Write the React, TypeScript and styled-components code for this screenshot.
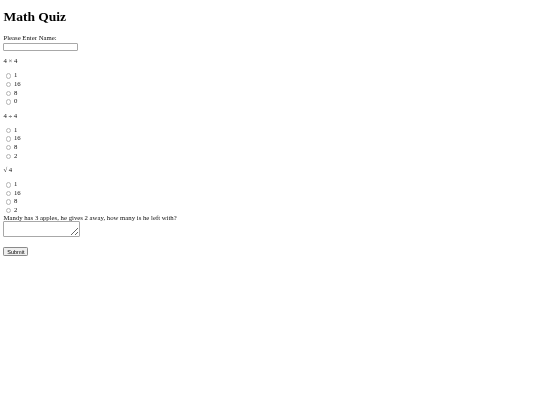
import React from 'react';
import styled, { createGlobalStyle } from 'styled-components';

const GlobalStyle = createGlobalStyle`
  body {
    margin: 0;
    background: #fff;
  }
`;

const Page = styled.div`
  padding: 0 3.4px;
  font-family: "Liberation Serif", "Times New Roman", serif;
  font-size: 6.76px;
  line-height: 8.6px;
  color: #111;
`;

const Title = styled.h1`
  font-size: 13.5px;
  line-height: 16px;
  font-weight: bold;
  color: #000;
  margin: 9.2px 0 9px;
`;

const Label = styled.label<{ $tight?: boolean }>`
  display: block;
  margin-top: ${({ $tight }) => ($tight ? '-0.6px' : '0')};
  line-height: ${({ $tight }) => ($tight ? '7.2px' : '8.6px')};
`;

const NameInput = styled.input`
  display: block;
  box-sizing: border-box;
  width: 75px;
  height: 8.7px;
  margin: 0;
  padding: 0;
  border: 1px solid #a8a8a8;
  border-radius: 1px;
  background: #fff;
`;

const Question = styled.p`
  margin: 5.7px 0;
`;

const Options = styled.div`
  margin: 5.7px 0 0;
  &:not(:last-of-type) {
    margin-bottom: 5.7px;
  }
`;

const OptionRow = styled.label`
  display: flex;
  align-items: center;
  height: 8.6px;
`;

const Radio = styled.span`
  box-sizing: border-box;
  width: 5.4px;
  height: 5.4px;
  margin: 0.8px 3px 0 2.2px;
  border: 0.5px solid #b4b4b4;
  border-radius: 50%;
  background: #fff;
`;

const Answer = styled.textarea`
  display: block;
  box-sizing: border-box;
  width: 77px;
  height: 16px;
  margin: 0;
  padding: 0;
  border: 1px solid #a8a8a8;
  border-radius: 1px;
  resize: both;
`;

const SubmitButton = styled.button`
  display: block;
  box-sizing: border-box;
  margin-top: 10.2px;
  width: 25px;
  height: 8.6px;
  padding: 0;
  font-family: "Liberation Sans", Arial, sans-serif;
  font-size: 5.6px;
  line-height: 6px;
  color: #000;
  background: #efefef;
  border: 0.6px solid #8a8a8a;
  border-radius: 1.2px;
`;

type Quiz = { q: string; options: string[] };

const quizzes: Quiz[] = [
  { q: '4 × 4', options: ['1', '16', '8', '0'] },
  { q: '4 ÷ 4', options: ['1', '16', '8', '2'] },
  { q: '√ 4', options: ['1', '16', '8', '2'] },
];

export default function App() {
  return (
    <Page>
      <GlobalStyle />
      <Title>Math Quiz</Title>
      <Label htmlFor="name">Please Enter Name:</Label>
      <NameInput id="name" type="text" />
      {quizzes.map((item, i) => (
        <React.Fragment key={i}>
          <Question>{item.q}</Question>
          <Options>
            {item.options.map((opt) => (
              <OptionRow key={opt}>
                <Radio />
                {opt}
              </OptionRow>
            ))}
          </Options>
        </React.Fragment>
      ))}
      <Label htmlFor="apples" $tight>
        Mandy has 3 apples, he gives 2 away, how many is he left with?
      </Label>
      <Answer id="apples" />
      <SubmitButton type="submit">Submit</SubmitButton>
    </Page>
  );
}
